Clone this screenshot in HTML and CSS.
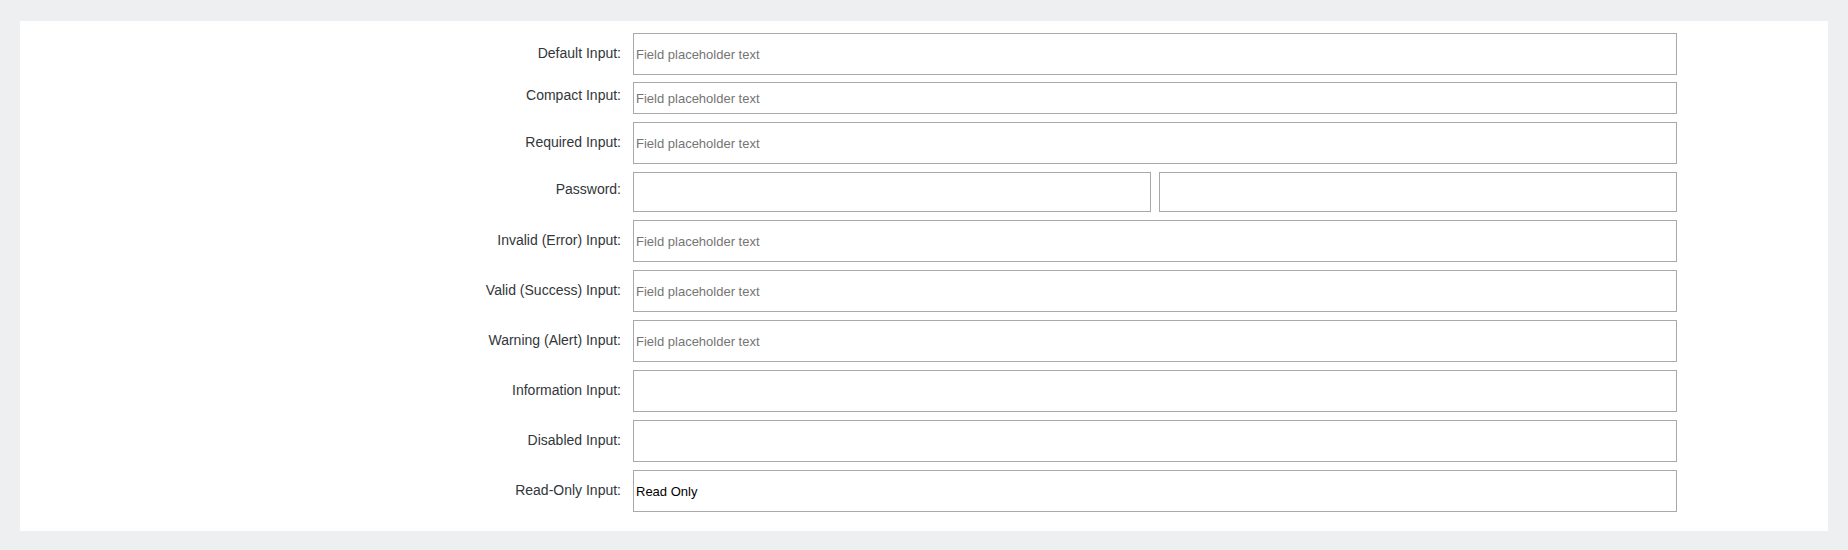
FILE: index.html
```html
<!DOCTYPE html>
<html lang="en">
<head>
<meta charset="utf-8">
<title>Input states</title>
<link rel="stylesheet" href="styles.css">
</head>
<body>
<div class="panel">
  <form class="form">
    <div class="row">
      <label class="label" for="i1">Default Input:</label>
      <div class="field"><input id="i1" class="input" type="text" placeholder="Field placeholder text"></div>
    </div>
    <div class="row row-compact">
      <label class="label label-raised" for="i2">Compact Input:</label>
      <div class="field"><input id="i2" class="input input-compact" type="text" placeholder="Field placeholder text"></div>
    </div>
    <div class="row">
      <label class="label" for="i3">Required Input:</label>
      <div class="field"><input id="i3" class="input" type="text" placeholder="Field placeholder text"></div>
    </div>
    <div class="row">
      <label class="label label-raised" for="i4">Password:</label>
      <div class="field field-split">
        <input id="i4" class="input input-pw" type="password">
        <input class="input input-pw" type="password">
      </div>
    </div>
    <div class="row">
      <label class="label" for="i5">Invalid (Error) Input:</label>
      <div class="field"><input id="i5" class="input" type="text" placeholder="Field placeholder text"></div>
    </div>
    <div class="row">
      <label class="label" for="i6">Valid (Success) Input:</label>
      <div class="field"><input id="i6" class="input" type="text" placeholder="Field placeholder text"></div>
    </div>
    <div class="row">
      <label class="label" for="i7">Warning (Alert) Input:</label>
      <div class="field"><input id="i7" class="input" type="text" placeholder="Field placeholder text"></div>
    </div>
    <div class="row">
      <label class="label" for="i8">Information Input:</label>
      <div class="field"><input id="i8" class="input" type="text"></div>
    </div>
    <div class="row">
      <label class="label" for="i9">Disabled Input:</label>
      <div class="field"><input id="i9" class="input" type="text"></div>
    </div>
    <div class="row">
      <label class="label" for="i10">Read-Only Input:</label>
      <div class="field"><input id="i10" class="input" type="text" value="Read Only" readonly></div>
    </div>
  </form>
</div>
</body>
</html>
```
FILE: styles.css
```css
html, body {
  margin: 0;
  padding: 0;
}
body {
  background: #edeff0;
  padding: 21px 20px 19px;
  font-family: "Liberation Sans", Arial, sans-serif;
}
.panel {
  background: #ffffff;
  padding: 12px 0 19px;
}
.form {
  display: flex;
  flex-direction: column;
  gap: 8px;
}
.row {
  display: flex;
  align-items: center;
  gap: 12px;
}
.row-compact {
  margin-top: -1px;
}
.label {
  width: 601px;
  flex: none;
  text-align: right;
  font-size: 14px;
  color: #32363a;
  line-height: 18px;
  padding-bottom: 2px;
}
.label-raised {
  padding-bottom: 7px;
}
.field {
  width: 1044px;
  flex: none;
  display: flex;
}
.field-split {
  gap: 8px;
}
.input {
  box-sizing: border-box;
  width: 100%;
  height: 42px;
  margin: 0;
  padding: 1px 2px;
  border: 1px solid #a9a9a9;
  border-radius: 0;
  background: #ffffff;
  font-family: "Liberation Sans", Arial, sans-serif;
  font-size: 13px;
  color: #000000;
  outline: none;
}
.input::placeholder {
  color: #757575;
}
.input-compact {
  height: 32px;
}
.input-pw {
  flex: 1 1 0;
  min-width: 0;
  height: 40px;
}
```
